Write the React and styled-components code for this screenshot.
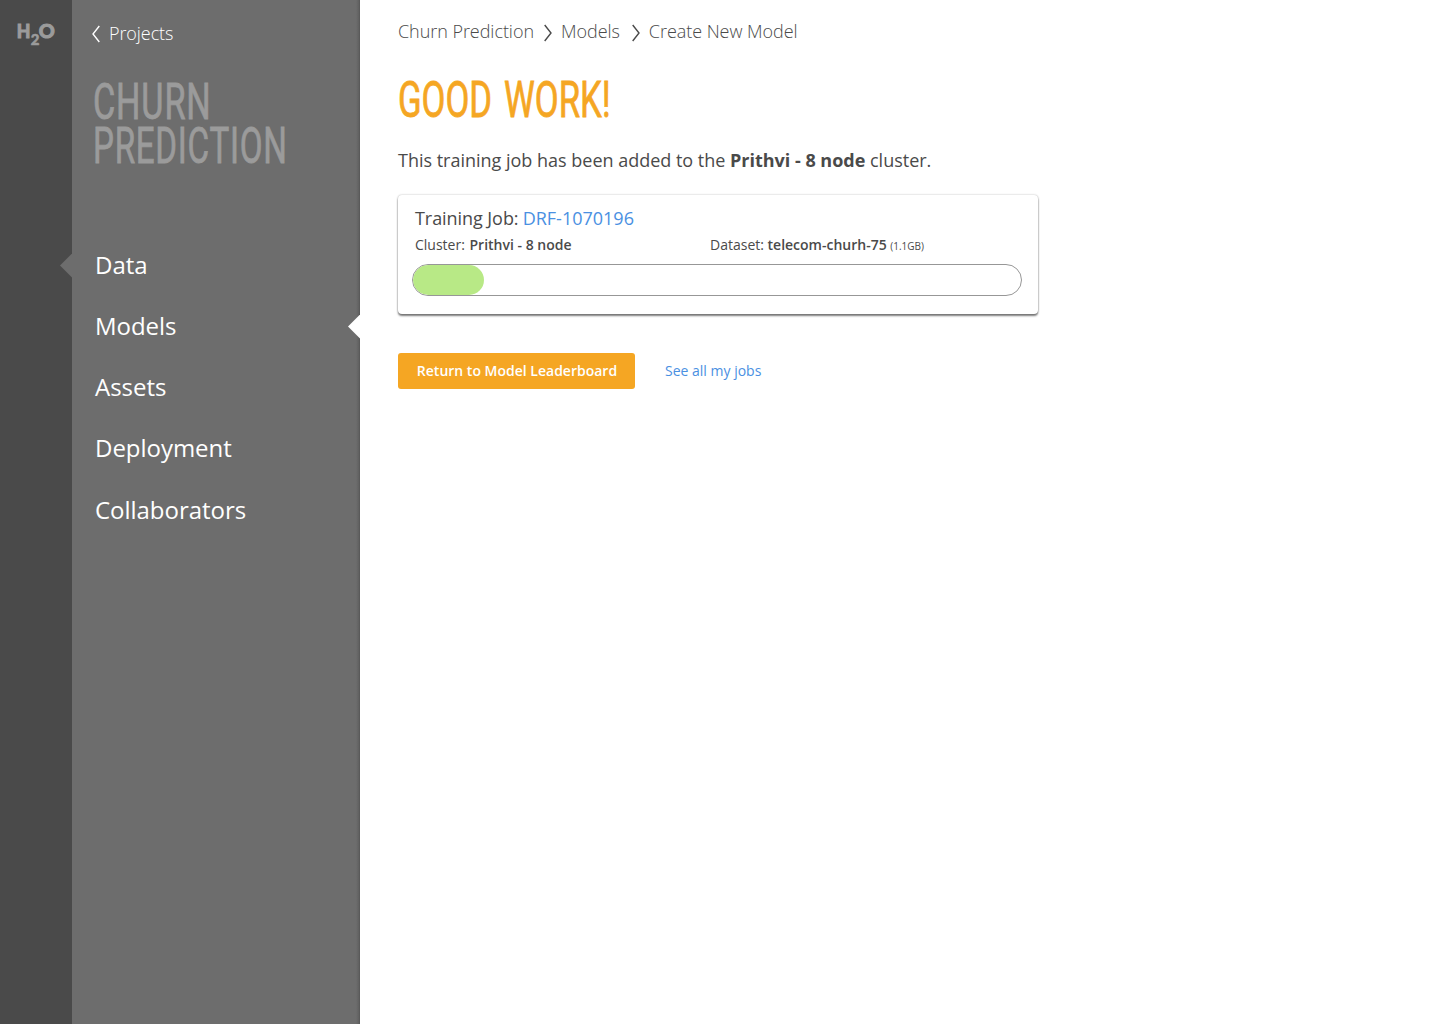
import React from 'react';
import styled, { createGlobalStyle } from 'styled-components';

const GlobalStyle = createGlobalStyle`
  *, *::before, *::after { box-sizing: border-box; }
  body {
    margin: 0;
    background: #fff;
    color: #4a4a4a;
    font-family: 'Open Sans', 'Noto Sans', sans-serif;
  }
`;

const Page = styled.div`
  display: flex;
  height: 1024px;
  overflow: hidden;
`;

const Rail = styled.div`
  flex: none;
  width: 72px;
  padding: 20px 0 0 16px;
  background: #4a4a4a;
`;

const Logo = styled.div`
  display: flex;
  align-items: flex-start;
  height: 28px;
  color: #9b9b9b;
  font: 900 19px/22px Lato, sans-serif;
  -webkit-text-stroke: 0.9px currentColor;
`;

const LogoStart = styled.span`
  transform: scaleX(0.93);
  transform-origin: 80% 50%;
`;

const LogoSub = styled.span`
  margin-top: 8px;
  font-size: 15px;
  -webkit-text-stroke-width: 0.5px;
`;

const LogoEnd = styled.span`
  transform: scaleX(1.04);
`;

const Sidebar = styled.aside`
  position: relative;
  flex: none;
  width: 288px;
  padding: 21px 0 0 20px;
  background: linear-gradient(to left, #565656 0, #626262 1.5px, #6d6d6d 4px);
`;

const BackLink = styled.a`
  display: flex;
  align-items: center;
  gap: 9px;
  height: 25px;
  color: #fff;
  font-size: 18px;
  font-weight: 300;
  line-height: 25px;
  letter-spacing: -0.08px;
`;

const ProjectTitle = styled.h2`
  margin: 34px 0 0 1px;
  color: #9b9b9b;
  font: 400 50px/44px Roboto, sans-serif;
`;

const Condensed = styled.span`
  display: block;
  width: max-content;
  white-space: nowrap;
  letter-spacing: ${(p) => p.$tracking || 0}px;
  word-spacing: ${(p) => p.$gap || 0}px;
  transform: translateY(-0.3px) scaleX(${(p) => p.$ratio});
  transform-origin: 0 50%;
  -webkit-text-stroke: 0.8px currentColor;
`;

const Nav = styled.nav`
  display: flex;
  flex-direction: column;
  margin: 66px 0 0 3px;
`;

const NavItem = styled.a`
  height: 61px;
  color: #fff;
  font-size: 24px;
  line-height: 61px;
  letter-spacing: -0.03px;

  &:last-child { margin-top: 1px; }
`;

const Notch = styled.span`
  position: absolute;
  top: ${(p) => p.$top}px;
  left: ${(p) => p.$left}px;
  width: 12px;
  height: 24px;
  background: ${(p) => p.$color};
  clip-path: polygon(100% 0, 0 50%, 100% 100%);
`;

const Main = styled.main`
  flex: 1;
  padding: 19px 0 0 38px;
`;

const Breadcrumbs = styled.div`
  display: flex;
  align-items: center;
  height: 25px;
  font-size: 18px;
  font-weight: 300;
  line-height: 25px;
  letter-spacing: -0.05px;
`;

const CrumbArrow = styled.span`
  display: flex;
  margin: ${(p) => p.$margin};
  padding-top: 3px;
`;

const Heading = styled.h1`
  margin: 34px 0 0;
  color: #f5a623;
  font: 400 50px/44px Roboto, sans-serif;
`;

const Message = styled.p`
  margin: 26px 0 0;
  font-size: 18px;
  line-height: 25px;
  letter-spacing: -0.01px;
  white-space: nowrap;
`;

const Card = styled.section`
  width: 640px;
  height: 119px;
  margin-top: 22px;
  padding: 11px 16px 0 17px;
  border-radius: 4px;
  background: #fff;
  box-shadow: 0 2px 2px rgba(0, 0, 0, 0.5), 0 0 2px rgba(0, 0, 0, 0.3);
`;

const JobTitle = styled.div`
  font-size: 18px;
  line-height: 25px;
  letter-spacing: -0.06px;
`;

const JobLink = styled.a`
  margin-left: -0.5px;
  color: #4a90e2;
  letter-spacing: 0;
`;

const JobMeta = styled.div`
  display: grid;
  grid-template-columns: 295px 1fr;
  height: 19px;
  margin-top: 4px;
  font-size: 14px;
  line-height: 19px;
`;

const Strong = styled.b`
  font-weight: ${(p) => p.$weight || 600};
  margin-left: ${(p) => p.$indent || 0}px;
`;

const Size = styled.small`
  font-size: 10px;
  line-height: 1;
`;

const ProgressTrack = styled.div`
  width: 610px;
  height: 32px;
  margin: 10px 0 0 -3px;
  overflow: hidden;
  border: 1px solid #979797;
  border-radius: 16px;
`;

const ProgressFill = styled.div`
  width: 71px;
  height: 30px;
  border-radius: 15px;
  background: #b8e986;
`;

const Actions = styled.div`
  display: flex;
  align-items: center;
  gap: 30px;
  margin-top: 39px;
`;

const Button = styled.button`
  width: 237px;
  height: 36px;
  padding: 0 0 2px 1px;
  border: 0;
  border-radius: 3px;
  background: #f5a623;
  color: #fff;
  font: 600 14px/19px 'Open Sans', sans-serif;
`;

const TextLink = styled.a`
  padding-bottom: 2px;
  color: #4a90e2;
  font-size: 14px;
  line-height: 19px;
`;

const Chevron = ({ left }) => (
  <svg width="8" height="18" viewBox="0 0 8 18" fill="none" stroke="currentColor" strokeWidth="1.4">
    <path d={left ? 'M7.3 1 1 9l6.3 8' : 'M.7 1 7 9l-6.3 8'} />
  </svg>
);

const NAV_ITEMS = ['Data', 'Models', 'Assets', 'Deployment', 'Collaborators'];

export default function App() {
  return (
    <Page>
      <GlobalStyle />
      <Rail>
        <Logo><LogoStart>H</LogoStart><LogoSub>2</LogoSub><LogoEnd>O</LogoEnd></Logo>
      </Rail>
      <Sidebar>
        <BackLink><Chevron left />Projects</BackLink>
        <ProjectTitle>
          <Condensed $ratio={0.685} $tracking={1.2}>CHURN</Condensed>
          <Condensed $ratio={0.663} $tracking={1.1}>PREDICTION</Condensed>
        </ProjectTitle>
        <Nav>
          {NAV_ITEMS.map((item) => <NavItem key={item}>{item}</NavItem>)}
        </Nav>
        <Notch $top={253.5} $left={-12} $color="#6d6d6d" />
        <Notch $top={314.5} $left={276} $color="#fff" />
      </Sidebar>
      <Main>
        <Breadcrumbs>
          <span>Churn Prediction</span>
          <CrumbArrow $margin="0 9px 0 10px"><Chevron /></CrumbArrow>
          <span>Models</span>
          <CrumbArrow $margin="0 9px 0 12px"><Chevron /></CrumbArrow>
          <span>Create New Model</span>
        </Breadcrumbs>
        <Heading><Condensed $ratio={0.693} $gap={5}>GOOD WORK!</Condensed></Heading>
        <Message>
          This training job has been added to the <Strong $weight={700}>Prithvi - 8 node</Strong> cluster.
        </Message>
        <Card>
          <JobTitle>Training Job: <JobLink>DRF-1070196</JobLink></JobTitle>
          <JobMeta>
            <span>Cluster: <Strong $indent={1}>Prithvi - 8 node</Strong></span>
            <span>Dataset: <Strong>telecom-churh-75</Strong> <Size>(1.1GB)</Size></span>
          </JobMeta>
          <ProgressTrack><ProgressFill /></ProgressTrack>
        </Card>
        <Actions>
          <Button>Return to Model Leaderboard</Button>
          <TextLink>See all my jobs</TextLink>
        </Actions>
      </Main>
    </Page>
  );
}
